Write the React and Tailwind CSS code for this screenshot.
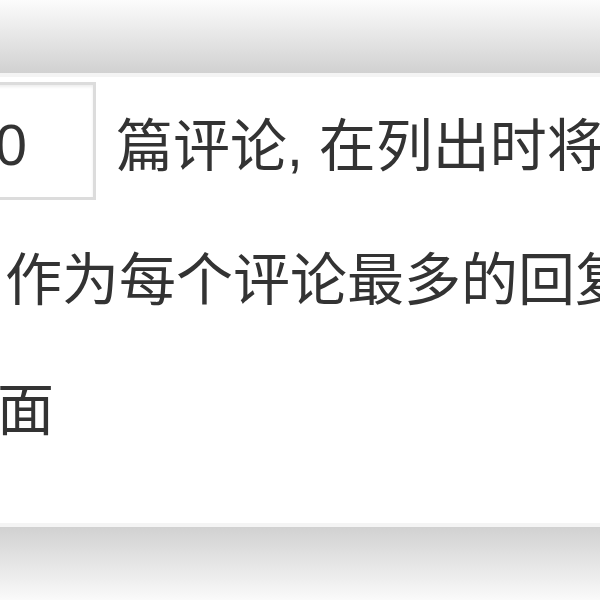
export default function App() {
	return (
		<div
			className="w-[600px] h-[600px] overflow-hidden bg-white flex flex-col text-[#333]"
			style={{ fontFamily: '"Liberation Sans", "Noto Sans CJK SC", sans-serif' }}
		>
			<div className="h-[73px] shrink-0 bg-gradient-to-b from-[#fcfcfc] to-[#d1d1d1]" />
			<div className="h-[4px] shrink-0 bg-[#f4f4f4]" />

			<div className="flex-1 flex flex-col text-[57px] leading-[64px]">
				<div className="mt-[5px] h-[118px] flex items-center">
					<div className="ml-[-80px] w-[176px] h-[118px] shrink-0 bg-white border-[3px] border-[#dcdcdc] shadow-[inset_0_2px_3px_rgba(0,0,0,0.07)] flex items-center justify-end pr-[66px] pt-[7px]">
						50
					</div>
					<span className="ml-[20px] mt-[10px] whitespace-nowrap">篇评论, 在列出时将</span>
				</div>
				<div className="mt-[48px] ml-[5px] whitespace-nowrap">作为每个评论最多的回复</div>
				<div className="mt-[66px] ml-[-3px] whitespace-nowrap">面</div>
			</div>

			<div className="h-[4px] shrink-0 bg-[#f4f4f4]" />
			<div className="h-[73px] shrink-0 bg-gradient-to-b from-[#d1d1d1] to-[#fafafa]" />
		</div>
	);
}
